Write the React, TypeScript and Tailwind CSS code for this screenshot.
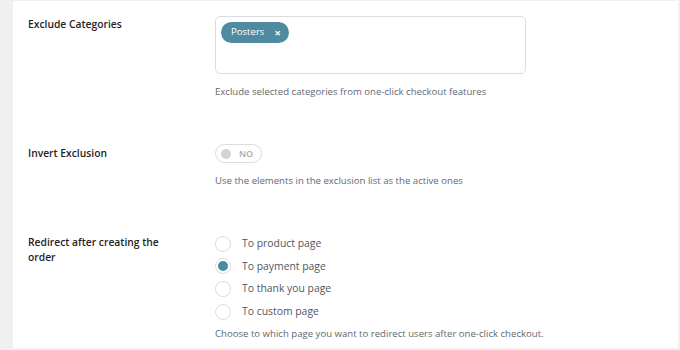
const font = { fontFamily: '"Open Sans", "Noto Sans", sans-serif' };

function Row({ label, children, className = "" }: { label: React.ReactNode; children: React.ReactNode; className?: string }) {
  return (
    <div className={`flex ${className}`}>
      <div className="w-[187px] shrink-0 text-[10.3px] font-semibold leading-[15px] text-[#1d2327]">{label}</div>
      <div className="flex-1">{children}</div>
    </div>
  );
}

function Radio({ label, checked = false }: { label: string; checked?: boolean }) {
  return (
    <label className="flex h-[22.6px] items-center gap-[11px]">
      <span className="flex h-4 w-4 items-center justify-center rounded-full border border-[#dcdcde] bg-white">
        {checked && <span className="h-[10px] w-[10px] rounded-full bg-[#4a8aa0]" />}
      </span>
      <span className="text-[10.4px] text-[#50575e]">{label}</span>
    </label>
  );
}

export default function App() {
  return (
    <div className="flex h-[350px] w-[680px] bg-[#f0f0f1] pl-[13px] pt-px pr-[2px] pb-[2px]" style={font}>
      <div className="flex-1 bg-white pl-[15px] pt-[15px]">
        <Row label={<div className="pt-px">Exclude Categories</div>}>
          <div className="flex h-[58px] w-[311px] items-start rounded-[5px] border border-[#dcdcde] p-[5px]">
            <span className="flex h-[21px] items-center gap-[10px] rounded-full bg-[#4e8aa0] pl-[10px] pr-[8px] text-[9.6px] text-white">
              Posters
              <span className="text-[11px] font-bold leading-none">×</span>
            </span>
          </div>
          <p className="mt-[10px] text-[9.6px] leading-[15px] text-[#646970]">Exclude selected categories from one-click checkout features</p>
        </Row>

        <Row className="mt-[45px]" label={<div className="pt-[1.5px]">Invert Exclusion</div>}>
          <div className="flex h-[19px] w-[47px] items-center gap-[8px] rounded-full border border-[#dcdcde] pl-[5px]">
            <span className="h-[10px] w-[10px] rounded-full bg-[#d3d3d3]" />
            <span className="text-[9px] font-semibold text-[#a7aaad]">NO</span>
          </div>
          <p className="mt-[9.5px] text-[9.6px] leading-[15px] text-[#646970]">Use the elements in the exclusion list as the active ones</p>
        </Row>

        <Row className="mt-[45px]" label={<div className="pt-[2px]">Redirect after creating the<br />order</div>}>
          <Radio label="To product page" />
          <Radio label="To payment page" checked />
          <Radio label="To thank you page" />
          <Radio label="To custom page" />
          <p className="mt-[3.5px] text-[9.6px] leading-[15px] text-[#646970]">Choose to which page you want to redirect users after one-click checkout.</p>
        </Row>
      </div>
    </div>
  );
}
